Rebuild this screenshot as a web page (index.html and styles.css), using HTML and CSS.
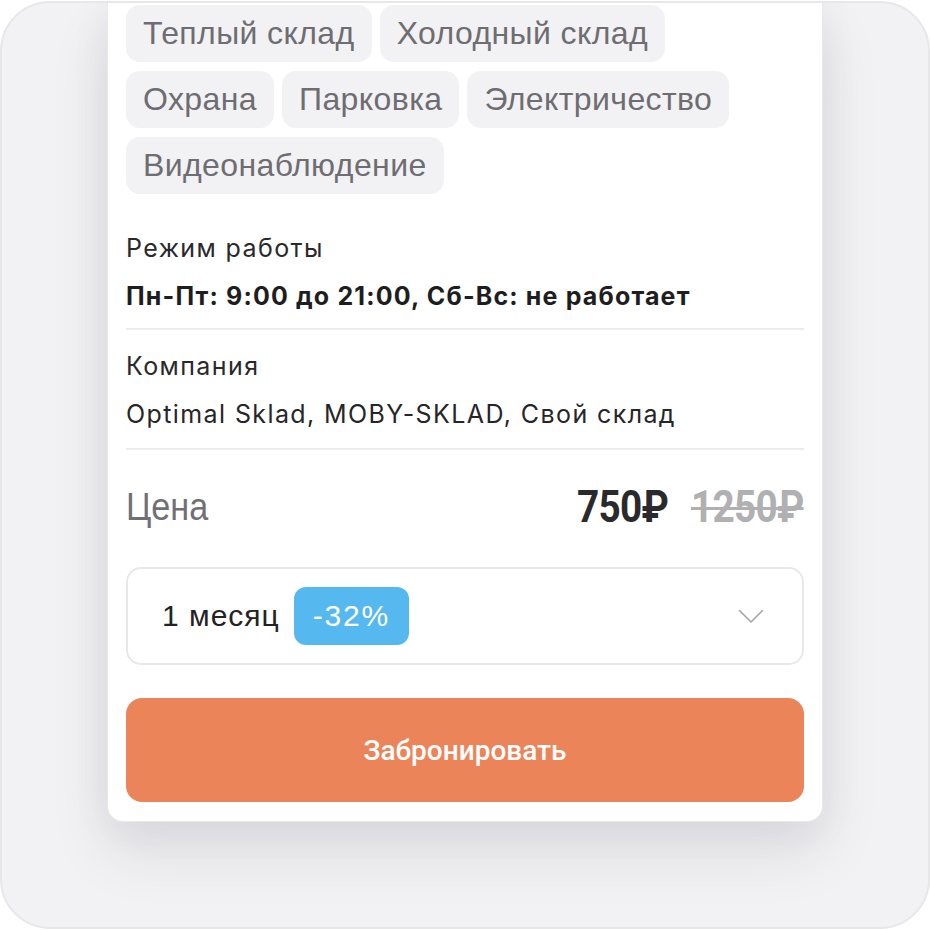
FILE: index.html
```html
<!DOCTYPE html>
<html lang="ru">
<head>
<meta charset="utf-8">
<title>Склад — бронирование</title>
<link rel="stylesheet" href="styles.css">
</head>
<body>
<div class="frame">
  <div class="card">
    <div class="tags">
      <span class="tag">Теплый склад</span>
      <span class="tag">Холодный склад</span>
      <span class="tag">Охрана</span>
      <span class="tag">Парковка</span>
      <span class="tag">Электричество</span>
      <span class="tag">Видеонаблюдение</span>
    </div>

    <div class="info first">
      <div class="info-label">Режим работы</div>
      <div class="info-value bold">Пн-Пт: 9:00 до 21:00, Сб-Вс: не работает</div>
    </div>
    <div class="info">
      <div class="info-label">Компания</div>
      <div class="info-value">Optimal Sklad, MOBY-SKLAD, Свой склад</div>
    </div>

    <div class="price-row">
      <span class="price-label">Цена</span>
      <span class="prices">
        <span class="price-now">750₽</span>
        <span class="price-old">1250₽</span>
      </span>
    </div>

    <div class="period">
      <span class="period-name">1 месяц</span>
      <span class="discount">-32%</span>
      <svg class="chevron" width="26" height="15" viewBox="0 0 26 15" aria-hidden="true">
        <polyline points="1.5,1.5 13,13 24.5,1.5" fill="none" stroke="#a4a4a8" stroke-width="1.6" stroke-linecap="round" stroke-linejoin="round"/>
      </svg>
    </div>

    <button class="book" type="button">Забронировать</button>
  </div>
</div>
</body>
</html>
```

FILE: styles.css
```css
* { box-sizing: border-box; }

html, body {
  margin: 0;
  padding: 0;
  background: #ffffff;
}

body {
  font-family: "Liberation Sans", Arial, sans-serif;
  color: #222224;
}

/* outer device-like panel */
.frame {
  margin-top: 1px;
  width: 930px;
  height: 928px;
  border: 2px solid #e7e7ea;
  border-radius: 50px;
  background: #f2f2f4;
  overflow: hidden;
}

/* white sheet, its top scrolled out of view */
.card {
  width: 716px;
  margin: 0 0 0 105px;
  padding: 2px 18px 19px;
  background: #ffffff;
  border: 1px solid #e9e9ec;
  border-top: none;
  border-radius: 0 0 16px 16px;
  box-shadow: 0 30px 60px rgba(40, 40, 70, 0.10), 0 6px 40px rgba(40, 40, 70, 0.06);
}

.tags {
  display: flex;
  flex-wrap: wrap;
  gap: 9px 8px;
}

.tag {
  display: inline-flex;
  align-items: center;
  height: 57px;
  padding: 0 17px;
  border-radius: 14px;
  background: #f2f2f4;
  color: #6d6d72;
  font-size: 32px;
  letter-spacing: 0.4px;
}

.info {
  border-bottom: 2px solid #ececee;
  padding-bottom: 17px;
}

.info.first { margin-top: 39px; }

.info + .info { margin-top: 21px; padding-bottom: 19px; }

.info-label {
  font-family: Inter, "Liberation Sans", sans-serif;
  font-size: 25px;
  line-height: 30px;
  letter-spacing: 1.4px;
  color: #29292b;
}

.info-value {
  margin-top: 18px;
  font-family: Inter, "Liberation Sans", sans-serif;
  font-size: 25px;
  line-height: 30px;
  letter-spacing: 1.4px;
  color: #262628;
}

.info-value.bold {
  font-weight: 700;
  letter-spacing: 1.15px;
  color: #1e1e20;
}

.price-row {
  display: flex;
  align-items: center;
  justify-content: space-between;
  height: 50px;
  margin-top: 32px;
}

.price-label {
  display: inline-block;
  font-size: 38px;
  color: #707074;
  transform: scaleX(0.9);
  transform-origin: left center;
}

.prices {
  display: flex;
  align-items: center;
  gap: 26px;
  font-family: Roboto, "Liberation Sans", sans-serif;
  font-weight: 700;
  font-size: 44px;
  letter-spacing: -0.8px;
  transform: scaleX(0.88);
  transform-origin: right center;
}

.price-now { color: #2a2a2d; }

.price-old {
  color: #b0b0b2;
  text-decoration: line-through;
  text-decoration-thickness: 3px;
}

.period {
  display: flex;
  align-items: center;
  height: 98px;
  margin-top: 35px;
  padding: 0 38px 0 34px;
  border: 2px solid #e8e8eb;
  border-radius: 15px;
}

.period-name {
  font-size: 30px;
  letter-spacing: 1px;
  color: #232325;
}

.discount {
  margin-left: 14px;
  display: inline-flex;
  align-items: center;
  height: 58px;
  padding: 0 19px;
  border-radius: 12px;
  background: #55b8ef;
  color: #ffffff;
  font-size: 30px;
  letter-spacing: 1.8px;
}

.chevron { margin-left: auto; }

.book {
  display: block;
  width: 100%;
  height: 104px;
  margin-top: 33px;
  border: none;
  border-radius: 16px;
  background: #ec845a;
  color: #ffffff;
  font-family: Roboto, "Liberation Sans", sans-serif;
  font-weight: 500;
  font-size: 28px;
}
```
